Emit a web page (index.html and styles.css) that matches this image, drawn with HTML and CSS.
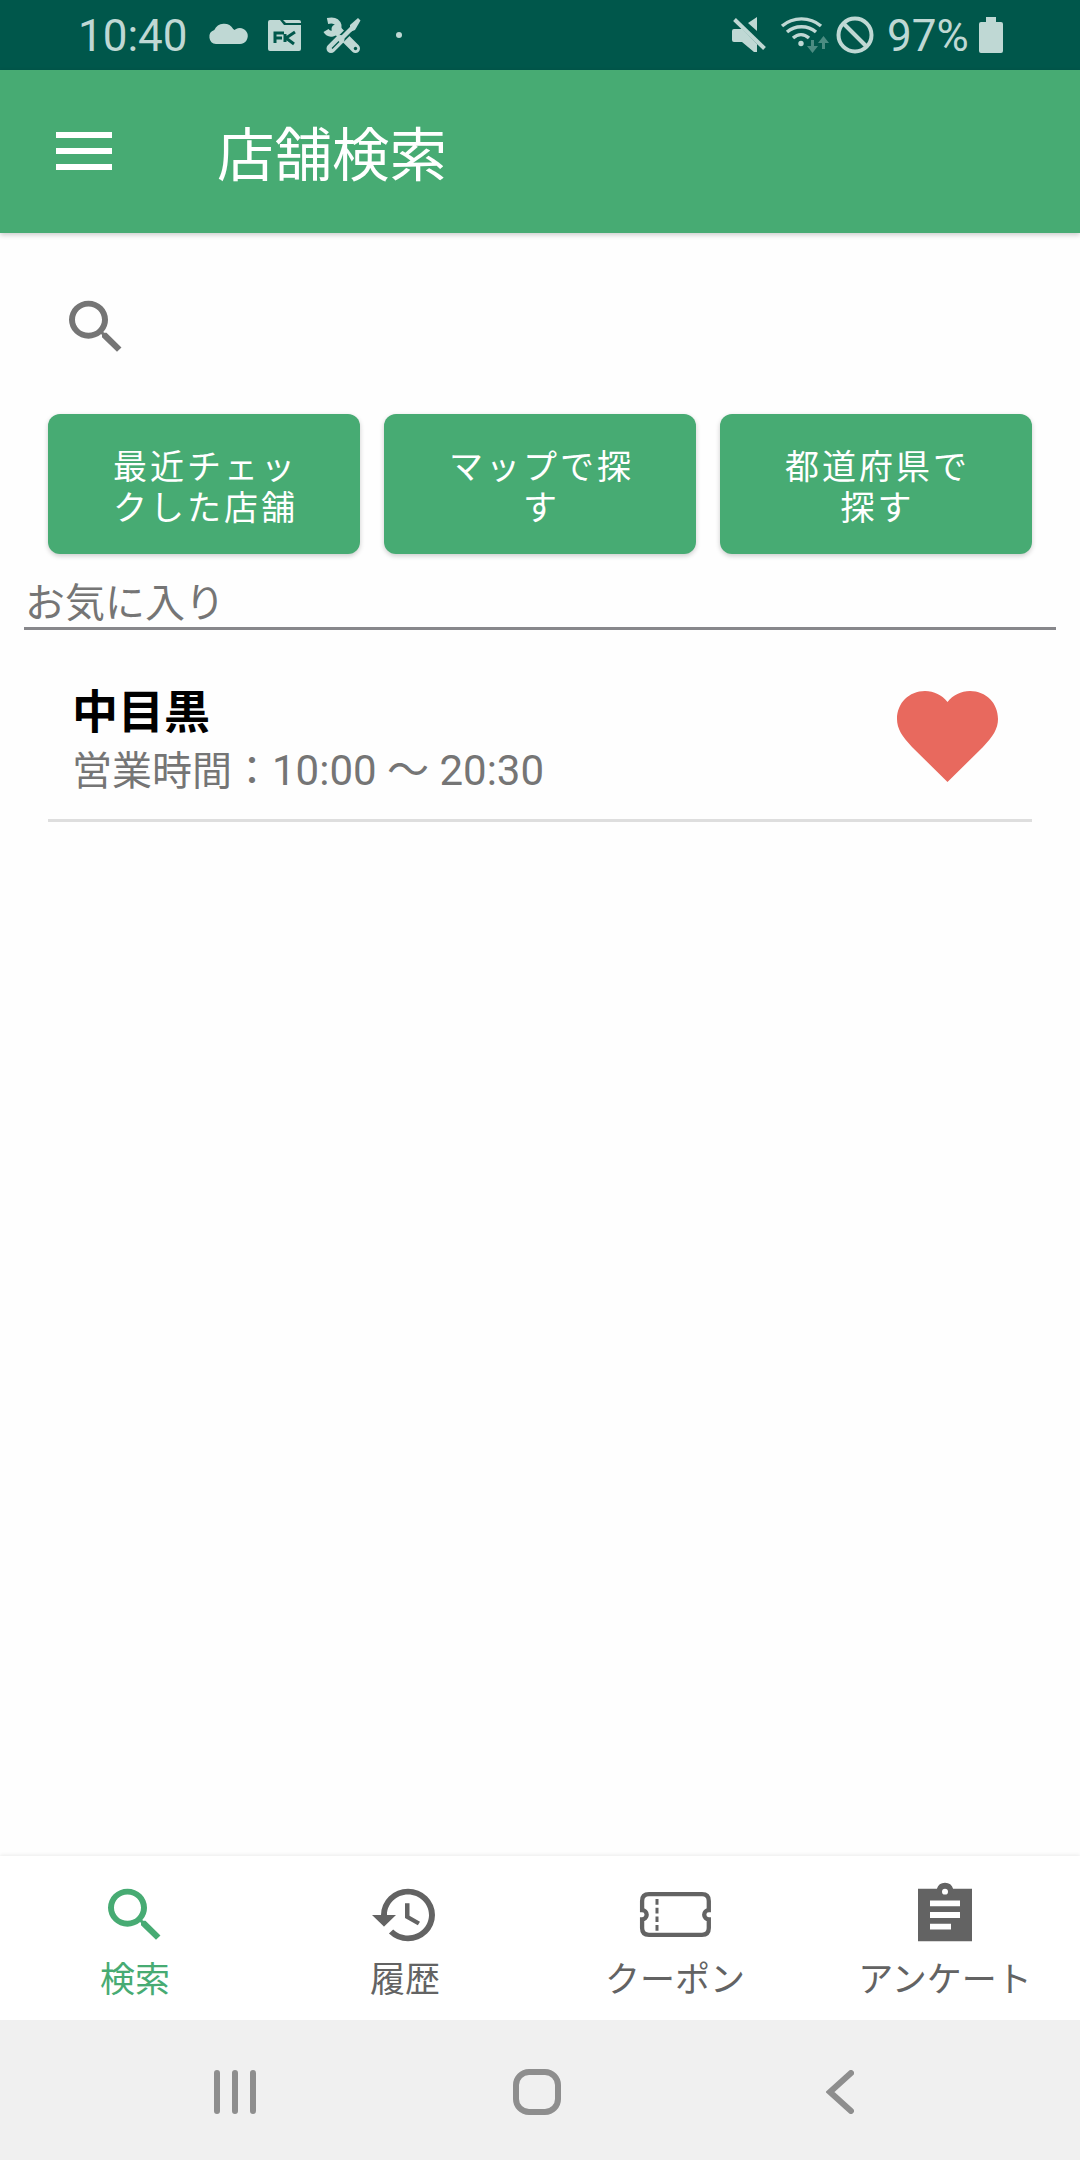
FILE: index.html
```html
<!DOCTYPE html>
<html lang="ja">
<head>
<meta charset="utf-8">
<title>店舗検索</title>
<link rel="stylesheet" href="styles.css">
</head>
<body>
<div class="screen">
  <div class="status-bar">
    <span class="clock">10:40</span>
    <svg class="notifications" width="200" height="70" viewBox="204 0 200 70">
      <path d="M216 44a7.200 7.200 0 0 1-1.700-14A10.570 10.570 0 0 1 233.200 29q.8.600 1.300 1A8 8 0 1 1 240 44z"/>
      <path d="M268 22q0-2 2-2h10l4 5h17v24q0 2-2 2h-29q-2 0-2-2zM283 20h16q2 0 2 2v1h-15z"/>
      <path class="cutout" d="M275 43V33h9M275 38h7M295 32l-9 6 8 6M285 34v8"/>
      <path class="wrench-head" d="M327.500 21q9-2 11 4.500 1 6.500-6 8-4 1-6.500-3"/>
      <path class="handle" d="M336 29l19.500 19.500"/>
      <circle class="hole" cx="355.500" cy="48.500" r="1.700"/>
      <path class="gap" d="M352 28l-11 11"/>
      <path d="M350 25l8-7 2.500 2.500-5.500 9.500-5 2z"/>
      <path class="shaft" d="M353 27l-13 13"/>
      <path class="handle" d="M340 39.500l-9 9"/>
      <path class="slot" d="M339 41.500l-7 7"/>
      <circle cx="399" cy="35" r="3"/>
    </svg>
    <svg class="indicators" width="146" height="70" viewBox="732 0 146 70">
      <path d="M732 31q0-2 2-2h8l15 15v8h-3l-12-10h-8q-2 0-2-2zM748 23l9-6v14z"/>
      <path class="stroke" d="M734.500 19.500l30 29"/>
      <path class="wave" d="M782 26c11-9.500 28-9.500 39 0M787 32c8-7 21-7 29 0M793 38c5-4.500 11-4.500 16 0"/>
      <circle cx="801" cy="43.500" r="2.700"/>
      <path class="dim" d="M811 40h3v6h4l-5.500 7-5.500-7h4zM822 49h3v-6h4l-5.500-7-5.500 7h4z"/>
      <circle class="stroke" cx="855" cy="35" r="16.500"/>
      <path class="stroke" d="M843.500 23.500l23 23"/>
    </svg>
    <span class="battery-level">97%</span>
    <svg class="battery" width="24" height="36" viewBox="0 0 24 36"><path d="M7 0h10v5h5q2 0 2 2v27q0 2-2 2H2q-2 0-2-2V7q0-2 2-2h5z"/></svg>
  </div>

  <header class="app-bar">
    <svg class="menu" width="56" height="38" viewBox="0 0 56 38"><path d="M0 0h56v6H0zM0 16h56v6H0zM0 32h56v6H0z"/></svg>
    <h1 class="title">店舗検索</h1>
  </header>

  <main class="content">
    <svg class="search" width="72" height="70" viewBox="0 0 24 24" preserveAspectRatio="none"><path d="M15.500 14h-.79l-.28-.27A6.471 6.471 0 0 0 16 9.500 6.500 6.500 0 1 0 9.500 16c1.610 0 3.090-.59 4.230-1.570l.27.28v.79l5 4.990L20.490 19l-4.990-5zm-6 0C7.010 14 5 11.990 5 9.500S7.010 5 9.500 5 14 7.010 14 9.500 11.990 14 9.500 14z"/></svg>
    <div class="actions">
      <button class="action">最近チェッ<br>クした店舗</button>
      <button class="action">マップで探<br>す</button>
      <button class="action">都道府県で<br>探す</button>
    </div>
    <h2 class="section-title">お気に入り</h2>
    <article class="shop">
      <div class="shop-info">
        <h3 class="shop-name">中目黒</h3>
        <p class="shop-hours">営業時間：<span class="hours">10:00 〜 20:30</span></p>
      </div>
      <svg class="heart" width="101" height="91" viewBox="0 0 101 91"><path d="M50.500 91L15 56C5 45 0 38 0 28 0 12 12 0 28 0c9 0 17 4 22.500 11C56 4 64 0 73 0c16 0 28 12 28 28 0 10-5 17-15 28z"/></svg>
    </article>
  </main>

  <nav class="tabs">
    <a class="tab active">
      <svg width="72" height="70" viewBox="0 0 24 24" preserveAspectRatio="none"><path d="M15.500 14h-.79l-.28-.27A6.471 6.471 0 0 0 16 9.500 6.500 6.500 0 1 0 9.500 16c1.610 0 3.090-.59 4.230-1.570l.27.28v.79l5 4.990L20.490 19l-4.990-5zm-6 0C7.010 14 5 11.990 5 9.500S7.010 5 9.500 5 14 7.010 14 9.500 11.990 14 9.500 14z"/></svg>
      <span>検索</span>
    </a>
    <a class="tab">
      <svg width="72" height="70" viewBox="0 0 24 24" preserveAspectRatio="none"><path d="M13 3a9 9 0 0 0-9 9H1l3.890 3.890.07.14L9 12H6c0-3.870 3.130-7 7-7s7 3.130 7 7-3.130 7-7 7c-1.930 0-3.680-.79-4.940-2.060l-1.420 1.420A8.954 8.954 0 0 0 13 21a9 9 0 0 0 0-18zm-1 5v5l4.280 2.540.72-1.210-3.500-2.080V8z"/></svg>
      <span>履歴</span>
    </a>
    <a class="tab">
      <svg width="72" height="70" viewBox="0 0 72 70"><path class="ticket" d="M10 14.200h53q6.800 0 6.800 6.800v9.200a4.600 4.600 0 0 0 0 9.200V48q0 6.800-6.800 6.800H10q-6.900 0-6.900-6.800v-8.600a4.600 4.600 0 0 0 0-9.200V21q0-6.800 6.900-6.800z"/><path class="perforation" d="M18 19v32"/></svg>
      <span>クーポン</span>
    </a>
    <a class="tab">
      <svg width="72" height="70" viewBox="0 0 24 24" preserveAspectRatio="none"><path fill-rule="evenodd" d="M3 3h6.300a2.800 2.800 0 0 1 5.400 0H21v18H3zM13 4a1 1 0 1 0-2 0 1 1 0 0 0 2 0zM7 7v2h10V7zM7 11v2h10v-2zM7 15v2h7v-2z"/></svg>
      <span>アンケート</span>
    </a>
  </nav>

  <div class="system-nav">
    <svg width="42" height="44" viewBox="0 0 42 44"><path d="M3 3v38M21 3v38M39 3v38"/></svg>
    <svg class="home" width="48" height="46" viewBox="0 0 48 46"><rect x="3" y="3" width="42" height="40" rx="13"/></svg>
    <svg width="28" height="44" viewBox="0 0 28 44"><path d="M25 3L4 22l21 19"/></svg>
  </div>
</div>
</body>
</html>
```
FILE: styles.css
```css
* {
  box-sizing: border-box;
}

body {
  margin: 0;
  font-family: Roboto, "Noto Sans CJK JP", sans-serif;
}

h1, h2, h3, p {
  margin: 0;
  font-weight: 400;
}

svg {
  display: block;
  flex: none;
}

.screen {
  display: flex;
  flex-direction: column;
  width: 1080px;
  height: 2160px;
  overflow: hidden;
  background: #fefefe;
}

.status-bar {
  display: flex;
  align-items: center;
  height: 70px;
  padding: 0 77px 0 78px;
  background: #00574b;
  color: #bfd8d4;
  fill: #bfd8d4;
  font-size: 44px;
  line-height: 70px;
}

.clock {
  width: 126px;
  padding-top: 2px;
}

.battery-level {
  width: 92px;
  padding: 2px 0 0 9px;
}

.indicators {
  margin-left: auto;
}

.battery {
  margin-left: 9px;
}

.cutout {
  fill: none;
  stroke: #00574b;
  stroke-width: 3;
}

.wrench-head {
  fill: none;
  stroke: #bfd8d4;
  stroke-width: 6;
}

.handle {
  stroke: #bfd8d4;
  stroke-width: 9;
  stroke-linecap: round;
}

.hole {
  fill: #00574b;
}

.gap {
  stroke: #00574b;
  stroke-width: 8;
}

.shaft {
  stroke: #bfd8d4;
  stroke-width: 4.5;
}

.slot {
  stroke: #00574b;
  stroke-width: 1.3;
}

.stroke {
  fill: none;
  stroke: #bfd8d4;
  stroke-width: 4;
}

.wave {
  fill: none;
  stroke: #bfd8d4;
  stroke-width: 3.4;
}

.dim {
  fill: #4c8c82;
}

.app-bar {
  display: flex;
  align-items: center;
  gap: 105px;
  height: 163px;
  padding: 0 56px;
  background: #47ab73;
  box-shadow: 0 2px 5px rgba(0, 0, 0, 0.2);
  color: #fff;
}

.menu {
  margin-bottom: 1px;
  fill: #fff;
}

.title {
  padding-top: 11px;
  font-size: 57.5px;
  line-height: 80px;
}

.content {
  flex: 1;
}

.search {
  margin: 59px 0 52px 60px;
  fill: #757575;
}

.actions {
  display: grid;
  grid-template-columns: repeat(3, 1fr);
  gap: 24px;
  padding: 0 48px;
}

.action {
  height: 140px;
  padding: 1px 0 0 3px;
  border: 0;
  border-radius: 12px;
  background: #47ab73;
  box-shadow: 0 2px 5px rgba(0, 0, 0, 0.2);
  color: #fff;
  font: 34px/41px "Noto Sans CJK JP", sans-serif;
  letter-spacing: 3px;
}

.section-title {
  height: 76px;
  margin: 0 24px;
  padding: 23px 0 0 1px;
  border-bottom: 3px solid #87878b;
  color: #757575;
  font-size: 40px;
  line-height: 54px;
}

.shop {
  display: flex;
  justify-content: space-between;
  height: 192px;
  margin: 0 48px;
  padding: 0 34px 0 24px;
  border-bottom: 3px solid #dedede;
}

.shop-name {
  padding-top: 50px;
  color: #000;
  font-size: 46px;
  font-weight: 700;
  line-height: 64px;
}

.shop-hours {
  color: #757575;
  font-size: 40px;
  line-height: 54px;
}

.hours {
  font-size: 42px;
}

.heart {
  margin-top: 61px;
  fill: #e8695e;
}

.tabs {
  display: grid;
  grid-template-columns: repeat(4, 1fr);
  height: 164px;
  background: #fff;
  box-shadow: 0 -1px 4px rgba(0, 0, 0, 0.08);
}

.tab {
  display: flex;
  flex-direction: column;
  align-items: center;
  gap: 6px;
  padding-top: 24px;
  color: #636363;
  fill: #636363;
  font-size: 35px;
  line-height: 50px;
}

.tab.active {
  color: #47ab73;
  fill: #47ab73;
}

.ticket {
  fill: none;
  stroke: #636363;
  stroke-width: 4.3;
}

.perforation {
  stroke: #636363;
  stroke-width: 3;
  stroke-dasharray: 5.7 3;
}

.system-nav {
  display: flex;
  align-items: center;
  justify-content: space-between;
  height: 140px;
  padding: 4px 226px 0 214px;
  background: #f0f0f0;
  fill: none;
  stroke: #8e8e8e;
  stroke-width: 6;
  stroke-linecap: round;
}

.home {
  margin-right: 8px;
}
```
